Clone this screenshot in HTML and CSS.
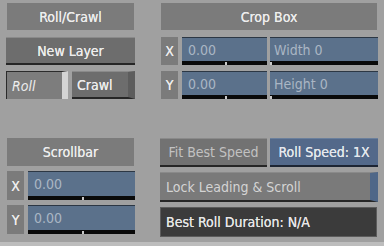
FILE: index.html
```html
<!DOCTYPE html>
<html lang="en">

<head>
    <meta charset="UTF-8">
    <title>Roll/Crawl</title>
    <link rel="stylesheet" href="styles.css">
</head>

<body>
    <div class="panel">
        <!-- top: roll/crawl + crop box -->
        <section class="col col-left top">
            <div class="header">Roll/Crawl</div>
            <div class="btn new-layer">New Layer</div>
            <div class="toggle">
                <span class="tog roll">Roll</span>
                <span class="tog crawl">Crawl</span>
            </div>
        </section>

        <section class="col col-right top">
            <div class="header">Crop Box</div>
            <div class="field-row">
                <span class="axis">X</span>
                <div class="field short">0.00<i class="tick" style="left: 50%"></i></div>
                <div class="field wide">Width 0<i class="tick" style="left: 0"></i></div>
            </div>
            <div class="field-row">
                <span class="axis">Y</span>
                <div class="field short">0.00<i class="tick" style="left: 50%"></i></div>
                <div class="field wide">Height 0<i class="tick" style="left: 0"></i></div>
            </div>
        </section>

        <!-- bottom: scrollbar + speed -->
        <section class="col col-left bottom">
            <div class="header">Scrollbar</div>
            <div class="field-row">
                <span class="axis">X</span>
                <div class="field">0.00<i class="tick" style="left: 50%"></i></div>
            </div>
            <div class="field-row">
                <span class="axis">Y</span>
                <div class="field">0.00<i class="tick" style="left: 50%"></i></div>
            </div>
        </section>

        <section class="col col-right bottom">
            <div class="speed-row">
                <div class="btn fit">Fit Best Speed</div>
                <div class="btn speed">Roll Speed: 1X</div>
            </div>
            <div class="btn lock">Lock Leading &amp; Scroll</div>
            <div class="duration">Best Roll Duration: N/A</div>
        </section>
    </div>
</body>

</html>
```

FILE: styles.css
```css
body {
    margin: 0;
    background-color: #a0a0a0;
    font-family: 'DejaVu Sans Condensed', 'Liberation Sans', sans-serif;
    font-size: 14px;
    width: 384px;
    height: 246px;
    overflow: hidden;
    border-bottom: 4px solid #bdbdbd;
    box-sizing: border-box;
}

.panel {
    display: grid;
    grid-template-columns: 129px 218px;
    column-gap: 25px;
    padding: 3px 0 0 6px;
}

.col {
    display: flex;
    flex-direction: column;
}

.col.top {
    gap: 6px;
}

.col.bottom {
    margin-top: 39px;
    gap: 5px;
}

.col-left .header,
.col-right.top .header {
    margin: 0 1px;
}

.header {
    height: 27px;
    background-color: #7b7b7b;
    color: #ededed;
    display: flex;
    align-items: center;
    justify-content: center;
}

.header,
.new-layer,
.crawl,
.axis,
.speed,
.duration {
    text-shadow: 0 0 0.6px #ededed;
}

.col.top .header {
    margin-bottom: 1px;
}

.col.bottom .header {
    height: 28px;
    margin-bottom: 0;
}

.btn {
    box-sizing: border-box;
    height: 28px;
    background-color: #6d6d6d;
    color: #ededed;
    display: flex;
    align-items: center;
    justify-content: center;
    border-top: 1px solid #8a8a8a;
    border-bottom: 2px solid #262626;
}

.toggle {
    display: flex;
    gap: 4px;
    height: 28px;
}

.tog {
    box-sizing: border-box;
    display: flex;
    align-items: center;
    color: #ededed;
}

.roll {
    width: 62px;
    background-color: #7d7d7d;
    border-top: 1px solid #2b2b2b;
    border-left: 1px solid #2b2b2b;
    border-right: 6px solid #d4d4d4;
    font-style: italic;
    padding-left: 5px;
}

.crawl {
    flex: 1;
    background-color: #6d6d6d;
    border-top: 1px solid #8a8a8a;
    border-bottom: 2px solid #262626;
    border-right: 7px solid #5d5d5d;
    padding-left: 5px;
}

.field-row {
    display: flex;
    gap: 4px;
    height: 28px;
    margin-left: 1px;
}

.col-left .field-row {
    height: 29px;
}

.axis {
    width: 17px;
    background-color: #7b7b7b;
    color: #ededed;
    display: flex;
    align-items: center;
    justify-content: center;
}

.field {
    position: relative;
    box-sizing: border-box;
    flex: 1;
    background-color: #5b718b;
    color: #aab6c4;
    border-top: 1px solid #2c3744;
    border-bottom: 4px solid #0a0a0a;
    padding-left: 6px;
    display: flex;
    align-items: center;
}

.field.short {
    flex: 0 0 85px;
}

.field.wide {
    margin-left: -1px;
    padding-left: 4px;
}

.tick {
    position: absolute;
    bottom: -4px;
    width: 2px;
    height: 3px;
    background-color: #c9c9c9;
}

.speed-row {
    display: flex;
    gap: 3px;
    height: 29px;
}

.speed-row .btn {
    height: 29px;
}

.fit {
    flex: 0 0 107px;
    color: #c2c2c2;
    background-color: #727272;
}

.speed {
    flex: 1;
    background-color: #53698a;
    border-top-color: #6a7f9c;
    border-bottom-color: #1d2533;
    color: #e4e8ee;
}

.lock {
    height: 30px;
    justify-content: flex-start;
    padding-left: 6px;
    background-color: #7a7a7a;
    color: #d4d4d4;
    border-right: 8px solid #4f6788;
}

.duration {
    box-sizing: border-box;
    height: 30px;
    margin-right: 1px;
    background-color: #3b3b3b;
    border: 1px solid #5c5c5c;
    color: #e6e6e6;
    display: flex;
    align-items: center;
    padding-left: 5px;
}
```
